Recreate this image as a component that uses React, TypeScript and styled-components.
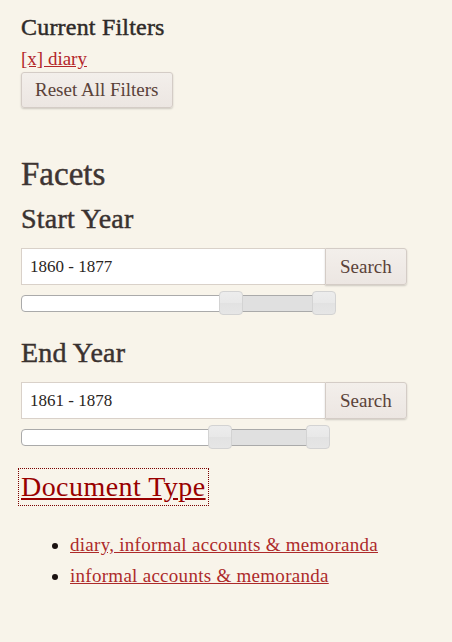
import React from "react";
import styled, { createGlobalStyle } from "styled-components";

const Global = createGlobalStyle`
  html, body {
    margin: 0;
    padding: 0;
    background: #f8f4ea;
  }
  body {
    font-family: "Liberation Serif", "Times New Roman", serif;
    color: #3a3230;
  }
`;

const Page = styled.div`
  padding: 13px 21px 40px 21px;
  width: 452px;
  box-sizing: border-box;
`;

const SmallHeading = styled.h2`
  margin: 0;
  font-size: 24px;
  line-height: 28px;
  font-weight: normal;
  letter-spacing: 0.2px;
  -webkit-text-stroke: 0.45px currentColor;
  color: #2f2a28;
`;

const FilterLink = styled.a`
  display: block;
  margin-top: 5px;
  font-size: 19px;
  line-height: 26px;
  color: #b3262a;
  text-decoration: underline;
`;

const Button = styled.button<{ $attached?: boolean }>`
  font-family: "Liberation Serif", "Times New Roman", serif;
  font-size: 19px;
  color: #5a4239;
  background: linear-gradient(#f3efeb, #ece6e2);
  border: 1px solid #d4ccc6;
  border-radius: ${(p) => (p.$attached ? "0 3px 3px 0" : "3px")};
  box-shadow: 0 1px 2px rgba(0, 0, 0, 0.18);
  padding: 0 ${(p) => (p.$attached ? "14px" : "13px")};
  height: ${(p) => (p.$attached ? "37px" : "36px")};
  cursor: pointer;
`;

const BigHeading = styled.h1`
  margin: 48px 0 0 0;
  font-size: 33px;
  line-height: 37px;
  font-weight: normal;
  -webkit-text-stroke: 0.45px currentColor;
  color: #3e3533;
`;

const FacetHeading = styled.h3<{ $gap: number }>`
  margin: ${(p) => p.$gap}px 0 0 0;
  font-size: 28px;
  line-height: 31px;
  font-weight: normal;
  letter-spacing: 0.2px;
  -webkit-text-stroke: 0.45px currentColor;
  color: #3a3230;
`;

const InputRow = styled.div`
  display: flex;
  margin-top: 14px;
  height: 37px;
`;

const RangeInput = styled.input`
  width: 304px;
  box-sizing: border-box;
  height: 37px;
  border: 1px solid #d9d1c9;
  border-right: none;
  background: #fff;
  font-family: "Liberation Serif", "Times New Roman", serif;
  font-size: 17px;
  color: #2b2523;
  padding: 0 8px;
  margin: 0;
  outline: none;
`;

const Track = styled.div`
  position: relative;
  margin-top: 10px;
  width: 304px;
  height: 17px;
  box-sizing: border-box;
  background: #fff;
  border: 1px solid #aaa;
  border-radius: 4px;
`;

const RangeFill = styled.div`
  position: absolute;
  top: 0;
  bottom: 0;
  background: #e0e0e0;
`;

const Handle = styled.span`
  position: absolute;
  top: -5px;
  width: 24px;
  height: 24px;
  margin-left: -12px;
  box-sizing: border-box;
  border: 1px solid #d3d3d3;
  border-radius: 4px;
  background: linear-gradient(#ededed 0%, #e8e8e8 50%, #e2e2e2 50%, #e6e6e6 100%);
`;

const DocHeading = styled.h3`
  margin: 23px 0 0 -2px;
  font-size: 28px;
  line-height: 36px;
  font-weight: normal;
  letter-spacing: 0.45px;
`;

const DocLink = styled.a`
  display: inline-block;
  padding: 0 2px;
  color: #990000;
  text-decoration: underline;
  outline: 1px dotted #7a0000;
`;

const List = styled.ul`
  margin: 24px 0 0 0;
  padding-left: 49px;
  font-size: 19px;
  line-height: 31px;
  letter-spacing: 0.28px;
  color: #1a1110;
`;

const ListLink = styled.a`
  color: #ad2a2a;
  text-decoration: underline;
`;

type SliderProps = { value: string; lo: number; hi: number };

function RangeFacet({ value, lo, hi }: SliderProps) {
  return (
    <>
      <InputRow>
        <RangeInput defaultValue={value} />
        <Button $attached>Search</Button>
      </InputRow>
      <Track>
        <RangeFill style={{ left: `${lo}%`, width: `${hi - lo}%` }} />
        <Handle style={{ left: `${lo}%` }} />
        <Handle style={{ left: `${hi}%` }} />
      </Track>
    </>
  );
}

export default function App() {
  return (
    <Page>
      <Global />
      <SmallHeading>Current Filters</SmallHeading>
      <FilterLink href="#">[x] diary</FilterLink>
      <Button>Reset All Filters</Button>
      <BigHeading>Facets</BigHeading>
      <FacetHeading $gap={10}>Start Year</FacetHeading>
      <RangeFacet value="1860 - 1877" lo={69.2} hi={100} />
      <FacetHeading $gap={25}>End Year</FacetHeading>
      <RangeFacet value="1861 - 1878" lo={65.5} hi={98} />
      <DocHeading>
        <DocLink href="#">Document Type</DocLink>
      </DocHeading>
      <List>
        <li>
          <ListLink href="#">diary, informal accounts &amp; memoranda</ListLink>
        </li>
        <li>
          <ListLink href="#">informal accounts &amp; memoranda</ListLink>
        </li>
      </List>
    </Page>
  );
}
